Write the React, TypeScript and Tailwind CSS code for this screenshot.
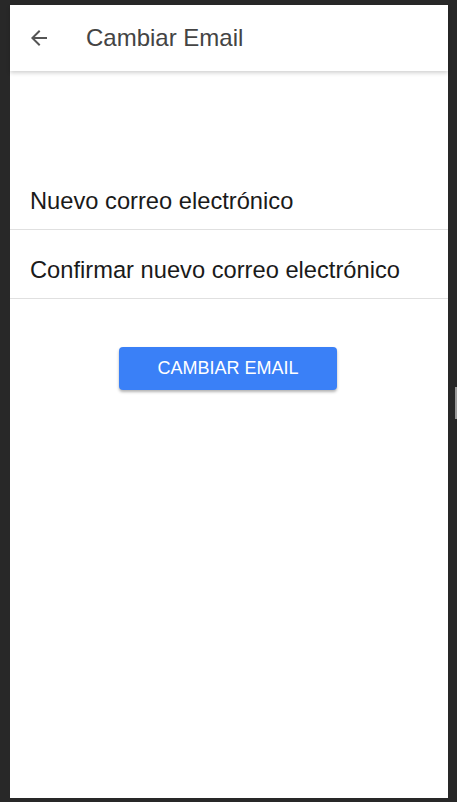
const BackArrow = () => (
  <svg viewBox="0 0 24 24" className="h-6 w-6 fill-[#555555]">
    <path d="M20 11H7.83l5.59-5.59L12 4l-8 8 8 8 1.41-1.41L7.83 13H20v-2z" />
  </svg>
);

const Field = ({ label }: { label: string }) => (
  <div className="flex h-[69px] items-end border-b border-[#e0e0e0] pb-[9px] pl-5 text-[23.7px] leading-normal text-[#1a1a1a]">
    {label}
  </div>
);

export default function App() {
  return (
    <div className="relative flex h-[802px] w-[457px] bg-[#282828] pt-[5px] pr-[9px] pb-[4px] pl-[10px] font-['Liberation_Sans',Arial,sans-serif]">
      <div className="flex flex-1 flex-col bg-white">
        <header className="z-10 flex h-[66px] items-center bg-white pl-[17px] shadow-[0_2px_4px_rgba(0,0,0,0.18)]">
          <BackArrow />
          <h1 className="ml-[35px] text-[24px] text-[#444444]">Cambiar Email</h1>
        </header>

        <div className="mt-[90px]">
          <Field label="Nuevo correo electrónico" />
          <Field label="Confirmar nuevo correo electrónico" />
        </div>

        <div className="mt-[48px] flex justify-center pr-[2px]">
          <button className="h-[43px] w-[218px] rounded-[4px] bg-[#3a80f7] text-[18px] text-white shadow-[0_2px_3px_rgba(0,0,0,0.3)]">
            CAMBIAR EMAIL
          </button>
        </div>
      </div>
      <div className="absolute top-[387px] right-0 h-[32px] w-[2px] bg-[#9a9a9a]" />
    </div>
  );
}
